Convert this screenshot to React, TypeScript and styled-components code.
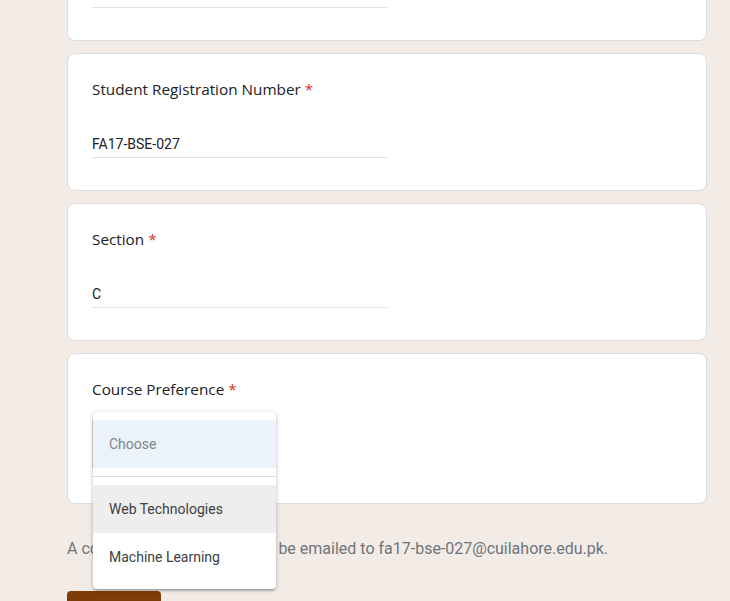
import React from "react";
import styled, { createGlobalStyle } from "styled-components";

const GlobalStyle = createGlobalStyle`
  html, body {
    margin: 0;
    padding: 0;
    background: #f2ebe6;
    overflow: hidden;
  }
  body {
    font-family: Roboto, "Liberation Sans", sans-serif;
  }
`;

const Page = styled.div`
  width: 640px;
  margin: -97px 0 0 67px;
  display: flex;
  flex-direction: column;
  gap: 12px;
`;

const Card = styled.div`
  position: relative;
  background: #fff;
  border: 1px solid #dadce0;
  border-radius: 8px;
  padding: 24px 24px 32px;
`;

const Label = styled.div`
  font-family: "Open Sans", sans-serif;
  font-size: 15.3px;
  line-height: 23px;
  padding-bottom: 1px;
  color: #202124;
`;

const Star = styled.span`
  color: #d93025;
  margin-left: 4px;
`;

const TextInput = styled.div`
  margin-top: 24px;
  width: 295px;
  height: 31px;
  border-bottom: 1px solid #e0e0e0;
  font-size: 14px;
  line-height: 20px;
  color: #202124;
  display: flex;
  align-items: flex-end;
  span {
    padding-bottom: 3px;
  }
`;

const SelectBox = styled.div`
  margin-top: 16px;
  width: 180px;
  height: 51px;
  border: 1px solid #dadce0;
  border-radius: 4px;
`;

const Menu = styled.div`
  position: absolute;
  left: 25px;
  top: 58px;
  width: 183px;
  background: #fff;
  border-radius: 4px;
  padding: 8px 0;
  box-shadow: 0 2px 2px rgba(0, 0, 0, 0.14), 0 3px 1px -2px rgba(0, 0, 0, 0.12),
    0 1px 5px rgba(0, 0, 0, 0.2);
  z-index: 2;
`;

const Option = styled.div<{ $bg?: string; $muted?: boolean }>`
  height: 48px;
  display: flex;
  align-items: center;
  padding-left: 16px;
  font-size: 14px;
  color: ${(p) => (p.$muted ? "#80868b" : "#3c4043")};
  background: ${(p) => p.$bg || "transparent"};
`;

const Divider = styled.div`
  height: 1px;
  background: #dadce0;
  margin: 8px 0;
`;

const Footer = styled.div`
  margin-top: 21px;
  font-size: 16px;
  line-height: 24px;
  color: #70757a;
`;

const SubmitButton = styled.button`
  margin-top: 18px;
  width: 94px;
  height: 36px;
  border: none;
  border-radius: 4px;
  background: #7f3b08;
  color: #fff;
  font-family: Roboto, sans-serif;
  font-size: 14px;
`;

const TextQuestion = ({ label, value }: { label: string; value: string }) => (
  <Card>
    <Label>
      {label}
      <Star>*</Star>
    </Label>
    <TextInput>
      <span>{value}</span>
    </TextInput>
  </Card>
);

export default function App() {
  return (
    <>
      <GlobalStyle />
      <Page>
        <TextQuestion label="Name" value="Muhammad Ali" />
        <TextQuestion label="Student Registration Number" value="FA17-BSE-027" />
        <TextQuestion label="Section" value="C" />
        <Card>
          <Label>
            Course Preference
            <Star>*</Star>
          </Label>
          <SelectBox />
          <Menu>
            <Option $bg="#ecf2fc" $muted>
              Choose
            </Option>
            <Divider />
            <Option $bg="#eeeeee">Web Technologies</Option>
            <Option>Machine Learning</Option>
          </Menu>
        </Card>
        <Footer>
          A copy of your responses will be emailed to fa17-bse-027@cuilahore.edu.pk.
        </Footer>
        <div>
          <SubmitButton>Submit</SubmitButton>
        </div>
      </Page>
    </>
  );
}
